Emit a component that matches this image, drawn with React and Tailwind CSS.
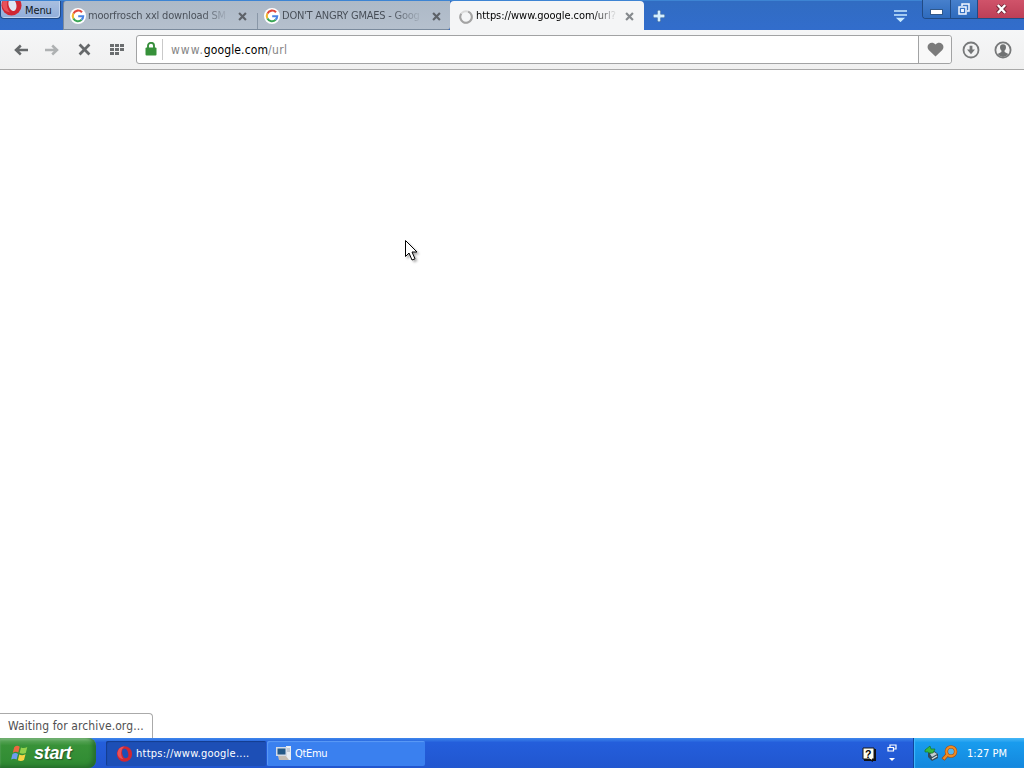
import React from "react";

const GoogleIcon = () => (
  <svg width="16" height="16" viewBox="0 0 16 16" className="shrink-0">
    <circle cx="8" cy="8" r="8" fill="#fff" />
    <g fill="none" strokeWidth="2.1">
      <path d="M12 4.3A5.2 5.2 0 0 0 3.4 5.6" stroke="#e2473b" />
      <path d="M3.4 5.6A5.2 5.2 0 0 0 3.4 10.6" stroke="#f0b72c" />
      <path d="M3.4 10.6A5.2 5.2 0 0 0 11.6 11.8" stroke="#3aa655" />
      <path d="M11.6 11.8A5.2 5.2 0 0 0 13.2 8.2H8.2" stroke="#4a84e4" />
    </g>
  </svg>
);

const OperaIcon = ({ className }) => (
  <svg viewBox="0 0 18 18" className={className}>
    <ellipse cx="9" cy="9" rx="8.6" ry="8.6" fill="#cf2733" />
    <path d="M1 8Q2 1 9 .6Q4 4 5.5 11Q6.5 14 8 15Q1 14 1 8" fill="#e8525a" />
    <ellipse cx="9.8" cy="8.4" rx="3.3" ry="5.4" transform="rotate(-14 9.8 8.4)" className="fill-current" />
  </svg>
);

const Cross = ({ size = 9, color = "#5d6268", weight = 2.4 }) => (
  <svg width={size} height={size} viewBox="0 0 10 10" className="shrink-0">
    <path d="M1.2 1.2L8.8 8.8M8.8 1.2L1.2 8.8" stroke={color} strokeWidth={weight} fill="none" />
  </svg>
);

const Arrow = ({ color, flip }) => (
  <svg width="14" height="12" viewBox="0 0 14 12" className={flip ? "-scale-x-100" : ""}>
    <path d="M6.8 1.5L2 6L6.8 10.5M2 6H14" stroke={color} strokeWidth="2.5" fill="none" />
  </svg>
);

function TabBar() {
  return (
    <header className="flex h-[30px] shrink-0 border-t border-[#3d84d3] bg-linear-to-b from-[#316cc2] to-[#326dcc]">
      <div className="flex h-[18px] w-[61px] shrink-0 overflow-hidden rounded-b-[4px] border-x border-b border-[#204a85] bg-linear-to-b from-[#a9bfe0] to-[#91aedb] shadow-[inset_-1px_-1px_0_#bfd2ee]">
        <OperaIcon className="-mt-[6px] h-[21px] w-[21px] shrink-0 text-[#dfe6f3]" />
        <span className="ml-[3px] pt-px text-[11px] leading-[18px] tracking-[-0.1px] text-[#101820]">Menu</span>
      </div>
      <div className="ml-[2px] flex w-[387px] shrink-0 rounded-tl-[3px] rounded-br-[3px] border-b border-l border-[#7b8b9d] bg-linear-to-b from-[#adb9c7] to-[#b5c0cd]">
        <div className="flex w-[193px] shrink-0 items-center pt-[2px] pl-[6px]">
          <GoogleIcon />
          <span className="ml-[2px] w-[140px] overflow-hidden bg-linear-to-r from-[#454c55] from-82% to-[#aeb9c6] bg-clip-text text-[11px] tracking-[-0.18px] whitespace-nowrap text-transparent">
            moorfrosch xxl download SM
          </span>
          <span className="ml-[10px]"><Cross /></span>
        </div>
        <div className="flex w-[193px] shrink-0 items-center pt-[2px]">
          <div className="mt-[9px] h-[16px] w-px bg-[#8997a7]" />
          <span className="ml-[6px] flex"><GoogleIcon /></span>
          <span className="ml-[2px] w-[140px] overflow-hidden bg-linear-to-r from-[#454c55] from-78% to-[#aeb9c6] bg-clip-text text-[11px] tracking-[-0.24px] whitespace-nowrap text-transparent">
            DON'T ANGRY GMAES - Goog
          </span>
          <span className="ml-[10px]"><Cross /></span>
        </div>
      </div>
      <div className="flex w-[194px] shrink-0 items-center rounded-t-[4px] bg-[#f4f5f6] pt-[2px] pl-[9px]">
        <svg width="14" height="14" viewBox="0 0 14 14">
          <circle cx="7" cy="7" r="5.8" fill="none" stroke="#d9d9d9" strokeWidth="2" />
          <path d="M9.2 1.6A5.8 5.8 0 1 1 2.2 3.8" fill="none" stroke="#a3a3a3" strokeWidth="2" />
        </svg>
        <span className="ml-[3px] w-[141px] overflow-hidden bg-linear-to-r from-black from-80% to-[#f4f5f6] bg-clip-text text-[11px] tracking-[-0.05px] whitespace-nowrap text-transparent">
          https://www.google.com/url?
        </span>
        <span className="ml-[8px]"><Cross color="#85898d" /></span>
      </div>
      <svg width="12" height="12" viewBox="0 0 12 12" className="mt-[9px] ml-[9px]">
        <path d="M6 0V12M0 6H12" stroke="#235394" strokeWidth="4" />
        <path d="M6 0.5V11.5M0.5 6H11.5" stroke="#d4efff" strokeWidth="2.8" />
      </svg>
      <svg width="15" height="12" viewBox="0 0 15 12" className="mt-[9px] ml-auto">
        <path d="M1 1H14M1 5H14M5 8.5H10L7.5 11Z" stroke="#c7e9ff" strokeWidth="1.7" fill="#c7e9ff" />
      </svg>
      <div className="-mt-px ml-[14px] flex h-[19px] w-[102px] overflow-hidden rounded-bl-[4px] border-b border-l border-[#214b85]">
        <div className="flex w-[28px] items-end justify-center border-r border-[#214b85] bg-linear-to-b from-[#4780cc] to-[#2e6bbd] pb-[4px]">
          <span className="h-[4px] w-[11px] bg-white shadow-[0_0_0_1px_#315889]" />
        </div>
        <div className="flex w-[27px] items-center justify-center border-r border-[#214b85] bg-linear-to-b from-[#4780cc] to-[#2e6bbd]">
          <svg width="12" height="12" viewBox="0 0 12 12" fill="none" stroke="#f4f8ff" strokeWidth="1.5">
            <path d="M4 3V1H11V8H9M1 4H8V11H1ZM3.8 6.8H5.2V8.2H3.8Z" />
          </svg>
        </div>
        <div className="flex flex-1 items-center justify-center bg-linear-to-b from-[#d0536a] to-[#bd3f57]">
          <svg width="11" height="10" viewBox="0 0 11 10">
            <path d="M1.5 1L9.5 9M9.5 1L1.5 9" stroke="#6c2635" strokeWidth="4" />
            <path d="M1.8 1L9.2 9M9.2 1L1.8 9" stroke="#fff" strokeWidth="2.4" />
          </svg>
        </div>
      </div>
    </header>
  );
}

function Toolbar() {
  return (
    <div className="flex h-[40px] shrink-0 items-center border-b border-[#a8a8a8] bg-linear-to-b from-[#f5f6f7] to-[#f0f0f0] pl-[14px]">
      <Arrow color="#66696b" />
      <span className="ml-[17px]"><Arrow color="#aeb1b2" flip /></span>
      <span className="ml-[19px]"><Cross size={13} color="#66696b" weight={2.1} /></span>
      <svg width="15" height="11" viewBox="0 0 15 11" className="ml-[19px]" fill="#6a6d6f">
        {[0, 4, 8].map((y) => [0, 5, 10].map((x) => (
          (y < 8 || x < 10) && <rect key={x + "-" + y} x={x} y={y} width="4" height="3" />
        )))}
      </svg>
      <div className="ml-[11px] flex h-[29px] w-[816px] items-center rounded-[3px] border border-[#a2a3a4] bg-white">
        <svg width="12" height="14" viewBox="0 0 12 14" className="-mt-px ml-[8px]">
          <path d="M3 6V3.8A3 3 0 0 1 9 3.8V6" fill="none" stroke="#398f3d" strokeWidth="1.9" />
          <rect x=".5" y="5.5" width="11" height="8" rx="1" fill="#36913a" />
        </svg>
        <span className="ml-[5px] h-[21px] w-px bg-[#c9c9c9]" />
        <span className="ml-[8px] text-[12px] leading-[16px] tracking-[1px] whitespace-nowrap text-[#858585]">
          www.<span className="tracking-[0.12px] text-black">google.com</span><span className="tracking-[0.3px]">/url</span>
        </span>
        <div className="ml-auto flex h-full w-[33px] items-center justify-center rounded-r-[3px] border-l border-[#a2a3a4] bg-[#f8f8f8]">
          <svg width="17" height="15" viewBox="0 0 17 15" className="-mt-px">
            <path d="M8.5 14.5L1.7 8C-2.2 3 4.8-2.2 8.5 2.6C12.2-2.2 19.2 3 15.3 8Z" fill="#7b7b7b" />
          </svg>
        </div>
      </div>
      <svg width="18" height="18" viewBox="0 0 18 18" className="ml-[10px]">
        <circle cx="9" cy="9" r="7.5" fill="none" stroke="#77797a" strokeWidth="1.8" />
        <path d="M7.6 4.8H10.4V8.6H13L9 13.2L5 8.6H7.6Z" fill="#747677" />
      </svg>
      <svg width="18" height="18" viewBox="0 0 18 18" className="ml-[14px]">
        <circle cx="9" cy="9" r="7.6" fill="#f4f4f4" stroke="#77797a" strokeWidth="1.8" />
        <path d="M6 6.5Q6 3.3 9 3.3T12 6.5Q12 8.7 10.6 9.6V11L14.4 13.1Q12 16 9 16T3.6 13.1L7.4 11V9.6Q6 8.7 6 6.5" fill="#707273" />
      </svg>
    </div>
  );
}

function Taskbar() {
  return (
    <footer className="flex h-[30px] shrink-0 bg-linear-to-b from-[#3f86ec] via-[#245edb] via-15% to-[#2156cf]">
      <div className="flex h-full w-[96px] shrink-0 items-center rounded-r-[8px] bg-linear-to-b from-[#65ad65] via-[#389238] via-25% to-[#2f8a32] pl-[11px] shadow-[inset_-3px_-2px_4px_#246b2b,inset_0_2px_2px_#79b879]">
        <svg width="18" height="17" viewBox="0 0 18 17">
          <path d="M3.2 2.2Q6-.3 8.7 1.7L7.3 7.6Q4.8 6 1.8 7.8Z" fill="#ec6840" />
          <path d="M10 2.4Q13 4 16.3 2L14.8 8Q12 9.6 8.6 8.1Z" fill="#93d14c" />
          <path d="M1.5 9Q4.3 7.3 7 8.9L5.6 14.5Q3 13 .1 14.5Z" fill="#6d9df0" />
          <path d="M8.3 9.4Q11 11 14.5 9.2L13 15Q10 16.8 6.9 15.2Z" fill="#f7d344" />
        </svg>
        <span className="ml-[5px] font-['Liberation_Sans',sans-serif] text-[18px] leading-[20px] font-bold tracking-[-0.3px] text-white italic [text-shadow:1px_1px_1px_#24552a]">
          start
        </span>
      </div>
      <div className="mt-[3px] ml-[10px] flex h-[25px] w-[160px] items-center rounded-[2px] bg-[#1d4fb6] pt-px pl-[10px] shadow-[inset_1px_1px_1px_#143c8e]">
        <OperaIcon className="h-[16px] w-[17px] text-[#1d4fb6]" />
        <span className="ml-[3px] pt-px text-[11px] tracking-[0.25px] whitespace-nowrap text-white">https://www.google....</span>
      </div>
      <div className="mt-[3px] ml-px flex h-[25px] w-[158px] items-center rounded-[2px] bg-[#3a80ef] pl-[9px] shadow-[inset_1px_1px_1px_#5c9bf6]">
        <svg width="16" height="15" viewBox="0 0 16 15">
          <path d="M10 0H15V14H10Z" fill="#e9edf2" />
          <path d="M11 3H14M11 5H14" stroke="#9da8b8" />
          <path d="M0 1H11V10H0Z" fill="#d3dbe7" />
          <path d="M1.5 2.5H9.5V8.5H1.5Z" fill="#245987" />
          <path d="M2 10H10L13 14H3Z" fill="#c5bdb3" />
        </svg>
        <span className="ml-[3px] pt-[2px] text-[11px] tracking-[-0.3px] text-white">QtEmu</span>
      </div>
      <div className="ml-auto flex items-center">
        <svg width="14" height="15" viewBox="0 0 14 15" className="mt-[2px]">
          <path d="M2 2H14V14H11V15L9 14H2Z" fill="#111" />
          <path d="M1 1H12V12H10V14L8 12H1Z" fill="#fffef0" stroke="#171717" />
          <text x="3.1" y="10.5" fontSize="10.5" fontWeight="bold" fontFamily="Liberation Sans, sans-serif">?</text>
        </svg>
        <svg width="10" height="18" viewBox="0 0 10 18" className="ml-[11px]">
          <path d="M3 3V1H9V5H7M1 3.5H6.5V7H1Z" fill="none" stroke="#fff" strokeWidth="1.2" />
          <path d="M2 14H8L5 17Z" fill="#fff" />
        </svg>
      </div>
      <div className="ml-[16px] flex w-[111px] items-center border-l border-[#10459c] bg-linear-to-b from-[#45b7f6] via-[#199cee] via-15% to-[#1487dd] pl-[10px] shadow-[inset_1px_0_1px_#42bbff]">
        <svg width="15" height="17" viewBox="0 0 15 17" className="shrink-0">
          <path d="M4 8L9 5L14 9V13L8 16L4 12Z" fill="#344a58" />
          <path d="M6 9L10 7L13 9L8 12Z" fill="#c5ced2" />
          <path d="M8 14L13 11" stroke="#dce2e3" strokeWidth="1.4" />
          <path d="M1 5L6 1L7 4L11 4L9 8L5 8L4 7L1 7Z" fill="#36b940" stroke="#16762c" strokeWidth=".7" />
        </svg>
        <svg width="17" height="17" viewBox="0 0 17 17" className="ml-[2px] shrink-0">
          <path d="M6.5 9.5L2 14.5" stroke="#a14b11" strokeWidth="4" />
          <circle cx="10" cy="6.5" r="4.6" fill="#55b6ee" stroke="#a84b10" strokeWidth="3.4" />
          <path d="M6.5 9.5L2.5 14" stroke="#ec8d25" strokeWidth="2.6" />
          <circle cx="10" cy="6.5" r="4.6" fill="none" stroke="#ef8c22" strokeWidth="2.2" />
        </svg>
        <span className="ml-[9px] pt-[2px] text-[11px] tracking-[0.02px] whitespace-nowrap text-white">1:27 PM</span>
      </div>
    </footer>
  );
}

export default function App() {
  return (
    <div className="relative flex h-[768px] w-[1024px] flex-col overflow-hidden bg-white font-['DejaVu_Sans_Condensed','DejaVu_Sans',sans-serif] select-none">
      <TabBar />
      <Toolbar />
      <main className="flex flex-1 items-end bg-white">
        <div className="flex h-[25px] w-[153px] items-center rounded-tr-[4px] border-t border-r border-[#aaa] pl-[8px] text-[12px] tracking-[0.1px] whitespace-nowrap text-[#505050]">
          Waiting for archive.org...
        </div>
      </main>
      <Taskbar />
      <svg width="16" height="24" viewBox="0 0 16 24" className="absolute top-[239px] left-[404px] drop-shadow-[2px_2px_1px_rgba(0,0,0,0.3)]">
        <path d="M1.5 1.5V17.5L5 14L8 21L11 19.8L8 13H13Z" fill="#fff" stroke="#000" />
      </svg>
    </div>
  );
}
